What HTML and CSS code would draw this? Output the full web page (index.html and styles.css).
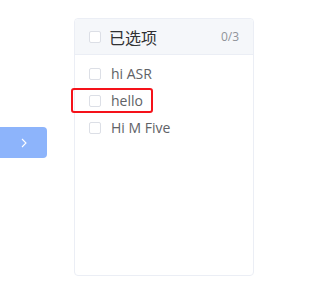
FILE: index.html
```html
<!DOCTYPE html>
<html lang="zh">
<head>
  <meta charset="UTF-8">
  <title>Transfer</title>
  <link rel="stylesheet" href="styles.css">
</head>
<body>
  <div class="transfer">
    <div class="buttons">
      <button class="move-btn" disabled>
        <svg width="6" height="10" viewBox="0 0 6 10"><path d="M1 1l4 4-4 4" fill="none" stroke="#fff" stroke-width="1.1"/></svg>
      </button>
    </div>
    <div class="panel">
      <div class="panel-header">
        <span class="check"></span>
        <span class="title">已选项</span>
        <span class="count">0/3</span>
      </div>
      <div class="panel-body">
        <div class="item"><span class="check"></span><span>hi ASR</span></div>
        <div class="item"><span class="check"></span><span>hello</span><div class="highlight"></div></div>
        <div class="item"><span class="check"></span><span>Hi M Five</span></div>
      </div>
    </div>
  </div>
</body>
</html>
```

FILE: styles.css
```css
body {
  margin: 0;
  background: #fff;
  font-family: "Open Sans", "Noto Sans CJK SC", sans-serif;
}
.transfer {
  display: flex;
  padding-top: 18px;
  gap: 27px;
}
.buttons {
  padding-top: 109px;
}
.move-btn {
  display: flex;
  align-items: center;
  justify-content: center;
  width: 47px;
  height: 31px;
  padding: 0;
  border: none;
  border-radius: 0 4px 4px 0;
  background: #8db4fb;
}
.panel {
  width: 178px;
  height: 256px;
  border: 1px solid #ebeef5;
  border-radius: 4px;
  position: relative;
}
.panel-header {
  display: flex;
  align-items: center;
  height: 35px;
  padding: 0 14px;
  background: #f5f7fa;
  border-bottom: 1px solid #ebeef5;
  border-radius: 4px 4px 0 0;
}
.check {
  width: 10px;
  height: 10px;
  border: 1px solid #dcdfe6;
  border-radius: 2px;
  background: #fff;
  flex-shrink: 0;
}
.title {
  margin-left: 8px;
  font-size: 16px;
  color: #303133;
  font-family: "Noto Sans CJK SC", sans-serif;
}
.count {
  margin-left: auto;
  font-size: 12px;
  color: #909399;
}
.panel-body {
  padding-top: 5px;
}
.item {
  position: relative;
  display: flex;
  align-items: center;
  gap: 10px;
  height: 27px;
  padding-left: 14px;
  font-size: 14px;
  color: #606266;
}
.highlight {
  position: absolute;
  left: -4px;
  top: 1px;
  width: 78px;
  height: 21px;
  border: 2px solid #f5121a;
  border-radius: 3px;
}
```
